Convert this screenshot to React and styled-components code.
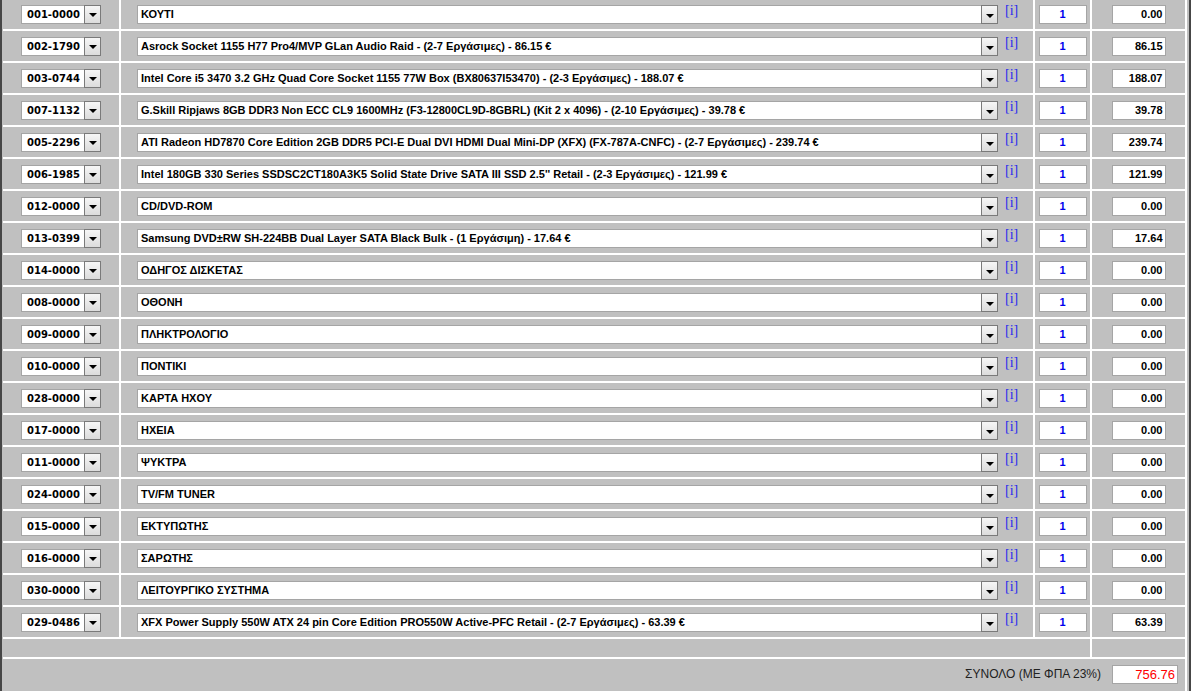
import styled, { createGlobalStyle } from 'styled-components';

const rows = [
  ['001-0000', 'ΚΟΥΤΙ', '0.00'],
  ['002-1790', 'Asrock Socket 1155 H77 Pro4/MVP GLan Audio Raid - (2-7 Εργάσιμες) - 86.15 €', '86.15'],
  ['003-0744', 'Intel Core i5 3470 3.2 GHz Quad Core Socket 1155 77W Box (BX80637I53470) - (2-3 Εργάσιμες) - 188.07 €', '188.07'],
  ['007-1132', 'G.Skill Ripjaws 8GB DDR3 Non ECC CL9 1600MHz (F3-12800CL9D-8GBRL) (Kit 2 x 4096) - (2-10 Εργάσιμες) - 39.78 €', '39.78'],
  ['005-2296', 'ATI Radeon HD7870 Core Edition 2GB DDR5 PCI-E Dual DVI HDMI Dual Mini-DP (XFX) (FX-787A-CNFC) - (2-7 Εργάσιμες) - 239.74 €', '239.74'],
  ['006-1985', "Intel 180GB 330 Series SSDSC2CT180A3K5 Solid State Drive SATA III SSD 2.5'' Retail - (2-3 Εργάσιμες) - 121.99 €", '121.99'],
  ['012-0000', 'CD/DVD-ROM', '0.00'],
  ['013-0399', 'Samsung DVD±RW SH-224BB Dual Layer SATA Black Bulk - (1 Εργάσιμη) - 17.64 €', '17.64'],
  ['014-0000', 'ΟΔΗΓΟΣ ΔΙΣΚΕΤΑΣ', '0.00'],
  ['008-0000', 'ΟΘΟΝΗ', '0.00'],
  ['009-0000', 'ΠΛΗΚΤΡΟΛΟΓΙΟ', '0.00'],
  ['010-0000', 'ΠΟΝΤΙΚΙ', '0.00'],
  ['028-0000', 'ΚΑΡΤΑ ΗΧΟΥ', '0.00'],
  ['017-0000', 'ΗΧΕΙΑ', '0.00'],
  ['011-0000', 'ΨΥΚΤΡΑ', '0.00'],
  ['024-0000', 'TV/FM TUNER', '0.00'],
  ['015-0000', 'ΕΚΤΥΠΩΤΗΣ', '0.00'],
  ['016-0000', 'ΣΑΡΩΤΗΣ', '0.00'],
  ['030-0000', 'ΛΕΙΤΟΥΡΓΙΚΟ ΣΥΣΤΗΜΑ', '0.00'],
  ['029-0486', 'XFX Power Supply 550W ATX 24 pin Core Edition PRO550W Active-PFC Retail - (2-7 Εργάσιμες) - 63.39 €', '63.39'],
];

const GlobalStyle = createGlobalStyle`
  html, body {
    margin: 0;
    padding: 0;
    background: #c0c0c0;
    overflow: hidden;
  }
  body {
    font-family: "Liberation Sans", Arial, sans-serif;
  }
`;

const Page = styled.div`
  width: 1191px;
  height: 691px;
  box-sizing: border-box;
  border-left: 2px solid #464646;
  border-right: 2px solid #464646;
  padding: 0 2px 0 1px;
  background: #c0c0c0;
  overflow: hidden;
`;

const Table = styled.div`
  display: grid;
  grid-template-columns: 116px 912px 55px 93px;
  gap: 2px;
  padding-right: 2px;
  margin-top: -1px;
  background: #fff;
`;

const Cell = styled.div`
  background: #c0c0c0;
  height: ${p => p.h || 30}px;
  display: flex;
  align-items: ${p => p.align || 'center'};
  justify-content: ${p => p.justify || 'center'};
  padding: ${p => p.pad || '0'};
  box-sizing: border-box;
  grid-column: ${p => p.span || 'auto'};
`;

const SelectBox = styled.div`
  display: flex;
  width: ${p => p.w}px;
  height: 19px;
  box-sizing: border-box;
  background: #fff;
  border: 1px solid #a5a5a5;
  border-right: none;
  margin-top: ${p => p.mt || 0}px;
`;

const SelectText = styled.span`
  flex: 1;
  padding-left: ${p => p.pl}px;
  font-family: ${p => p.code ? '"DejaVu Sans", Verdana, sans-serif' : '"Liberation Sans", Arial, sans-serif'};
  font-size: ${p => p.code ? '10px' : '11px'};
  font-weight: bold;
  color: #000;
  line-height: 17px;
  white-space: nowrap;
  overflow: hidden;
`;

const ArrowButton = styled.span`
  width: 17px;
  height: 19px;
  margin-top: -1px;
  box-sizing: border-box;
  border: 1px solid #7a7a7a;
  background: linear-gradient(#f6f6f6, #dcdcdc);
  display: flex;
  align-items: center;
  justify-content: center;
  &::after {
    content: '';
    margin-top: 2px;
    border-left: 4px solid transparent;
    border-right: 4px solid transparent;
    border-top: 4px solid #000;
  }
`;

const InfoLink = styled.a`
  align-self: flex-start;
  margin: 5px 0 0 7px;
  font-family: "Liberation Serif", "Times New Roman", serif;
  font-size: 14px;
  line-height: 14px;
  color: #2a2aee;
  text-decoration: none;
`;

const NumBox = styled.div`
  width: ${p => p.w}px;
  height: 19px;
  box-sizing: border-box;
  background: #fff;
  border: 1px solid #a5a5a5;
  font-size: ${p => p.total ? '13px' : '11px'};
  font-weight: ${p => p.total ? 'normal' : 'bold'};
  color: ${p => p.color || '#000'};
  text-align: ${p => p.align || 'center'};
  padding: 0 2px;
  line-height: 17px;
`;

const TotalLabel = styled.span`
  font-size: 12px;
  line-height: 19px;
  color: #222;
  margin-right: 11px;
`;

function ComponentRow({ code, name, price }) {
  return (
    <>
      <Cell>
        <SelectBox w={80}>
          <SelectText code pl={5}>{code}</SelectText>
          <ArrowButton />
        </SelectBox>
      </Cell>
      <Cell justify="flex-start" pad="0 0 0 16px">
        <SelectBox w={861} mt={1}>
          <SelectText pl={3}>{name}</SelectText>
          <ArrowButton />
        </SelectBox>
        <InfoLink href="#">[i]</InfoLink>
      </Cell>
      <Cell>
        <NumBox w={48} color="#0000ee">1</NumBox>
      </Cell>
      <Cell>
        <NumBox w={54} align="right">{price}</NumBox>
      </Cell>
    </>
  );
}

export default function App() {
  return (
    <>
      <GlobalStyle />
      <Page>
        <Table>
          {rows.map(([code, name, price]) => (
            <ComponentRow key={code} code={code} name={name} price={price} />
          ))}
          <Cell h={18} span="1 / 4" />
          <Cell h={18} />
          <Cell h={40} span="1 / 5" align="flex-start" justify="flex-end" pad="6px 7px 0 0">
            <TotalLabel>ΣΥΝΟΛΟ (ΜΕ ΦΠΑ 23%)</TotalLabel>
            <NumBox w={66} total align="right" color="#ff0000">756.76</NumBox>
          </Cell>
        </Table>
      </Page>
    </>
  );
}
